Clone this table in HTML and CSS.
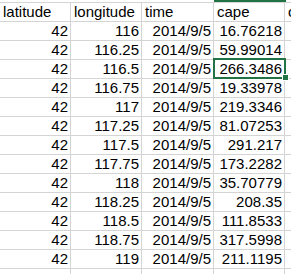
FILE: index.html
```html
<!DOCTYPE html>
<html lang="en">
<head>
    <meta charset="UTF-8">
    <meta name="viewport" content="width=device-width, initial-scale=1.0">
    <title>cape.csv</title>
    <link rel="stylesheet" href="styles.css">
</head>
<body>
    <!-- Column header strip (selected column D) -->
    <div class="col-strip">
        <div class="col-strip-mark"></div>
    </div>

    <!-- Sheet -->
    <table class="sheet">
        <colgroup>
            <col class="col-a">
            <col class="col-b">
            <col class="col-c">
            <col class="col-d">
            <col class="col-e">
        </colgroup>
        <tr>
            <td>latitude</td>
            <td>longitude</td>
            <td>time</td>
            <td>cape</td>
            <td>cin</td>
        </tr>
        <tr><td class="num">42</td><td class="num">116</td><td class="num">2014/9/5</td><td class="num">16.76218</td><td></td></tr>
        <tr><td class="num">42</td><td class="num">116.25</td><td class="num">2014/9/5</td><td class="num">59.99014</td><td></td></tr>
        <tr><td class="num">42</td><td class="num">116.5</td><td class="num">2014/9/5</td><td class="num active">266.3486<span class="sel"><span class="sel-handle"></span></span></td><td></td></tr>
        <tr><td class="num">42</td><td class="num">116.75</td><td class="num">2014/9/5</td><td class="num">19.33978</td><td></td></tr>
        <tr><td class="num">42</td><td class="num">117</td><td class="num">2014/9/5</td><td class="num">219.3346</td><td></td></tr>
        <tr><td class="num">42</td><td class="num">117.25</td><td class="num">2014/9/5</td><td class="num">81.07253</td><td></td></tr>
        <tr><td class="num">42</td><td class="num">117.5</td><td class="num">2014/9/5</td><td class="num">291.217</td><td></td></tr>
        <tr><td class="num">42</td><td class="num">117.75</td><td class="num">2014/9/5</td><td class="num">173.2282</td><td></td></tr>
        <tr><td class="num">42</td><td class="num">118</td><td class="num">2014/9/5</td><td class="num">35.70779</td><td></td></tr>
        <tr><td class="num">42</td><td class="num">118.25</td><td class="num">2014/9/5</td><td class="num">208.35</td><td></td></tr>
        <tr><td class="num">42</td><td class="num">118.5</td><td class="num">2014/9/5</td><td class="num">111.8533</td><td></td></tr>
        <tr><td class="num">42</td><td class="num">118.75</td><td class="num">2014/9/5</td><td class="num">317.5998</td><td></td></tr>
        <tr><td class="num">42</td><td class="num">119</td><td class="num">2014/9/5</td><td class="num">211.1195</td><td></td></tr>
        <tr><td></td><td></td><td></td><td></td><td></td></tr>
    </table>
</body>
</html>
```

FILE: styles.css
```css
body {
    font-family: "Liberation Sans", Arial, sans-serif;
    margin: 0;
    padding: 0;
    background-color: #fff;
    overflow: hidden;
}

.col-strip {
    height: 2px;
    display: flex;
}

.col-strip-mark {
    width: 72px;
    height: 2px;
    margin-left: 214px;
    background-color: #217346;
}

.sheet {
    table-layout: fixed;
    border-collapse: separate;
    border-spacing: 0;
    width: 326px;
    border-top: 1px solid #d4d4d4;
}

.col-a { width: 71px; }
.col-b { width: 71px; }
.col-c { width: 72px; }
.col-d { width: 71px; }
.col-e { width: 41px; }

.sheet td {
    height: 18px;
    padding: 0 2px 0 3px;
    border-right: 1px solid #d4d4d4;
    border-bottom: 1px solid #d4d4d4;
    font-size: 15px;
    line-height: 18px;
    color: #000;
    white-space: nowrap;
    vertical-align: bottom;
}

.sheet td.num {
    text-align: right;
}

.sheet td.active {
    position: relative;
}

.sel {
    position: absolute;
    left: -1px;
    top: -2px;
    right: -2px;
    bottom: -1px;
    border: 2px solid #217346;
}

.sel-handle {
    position: absolute;
    right: -5px;
    bottom: -4px;
    width: 5px;
    height: 5px;
    background-color: #217346;
    border: 1px solid #fff;
}
```
